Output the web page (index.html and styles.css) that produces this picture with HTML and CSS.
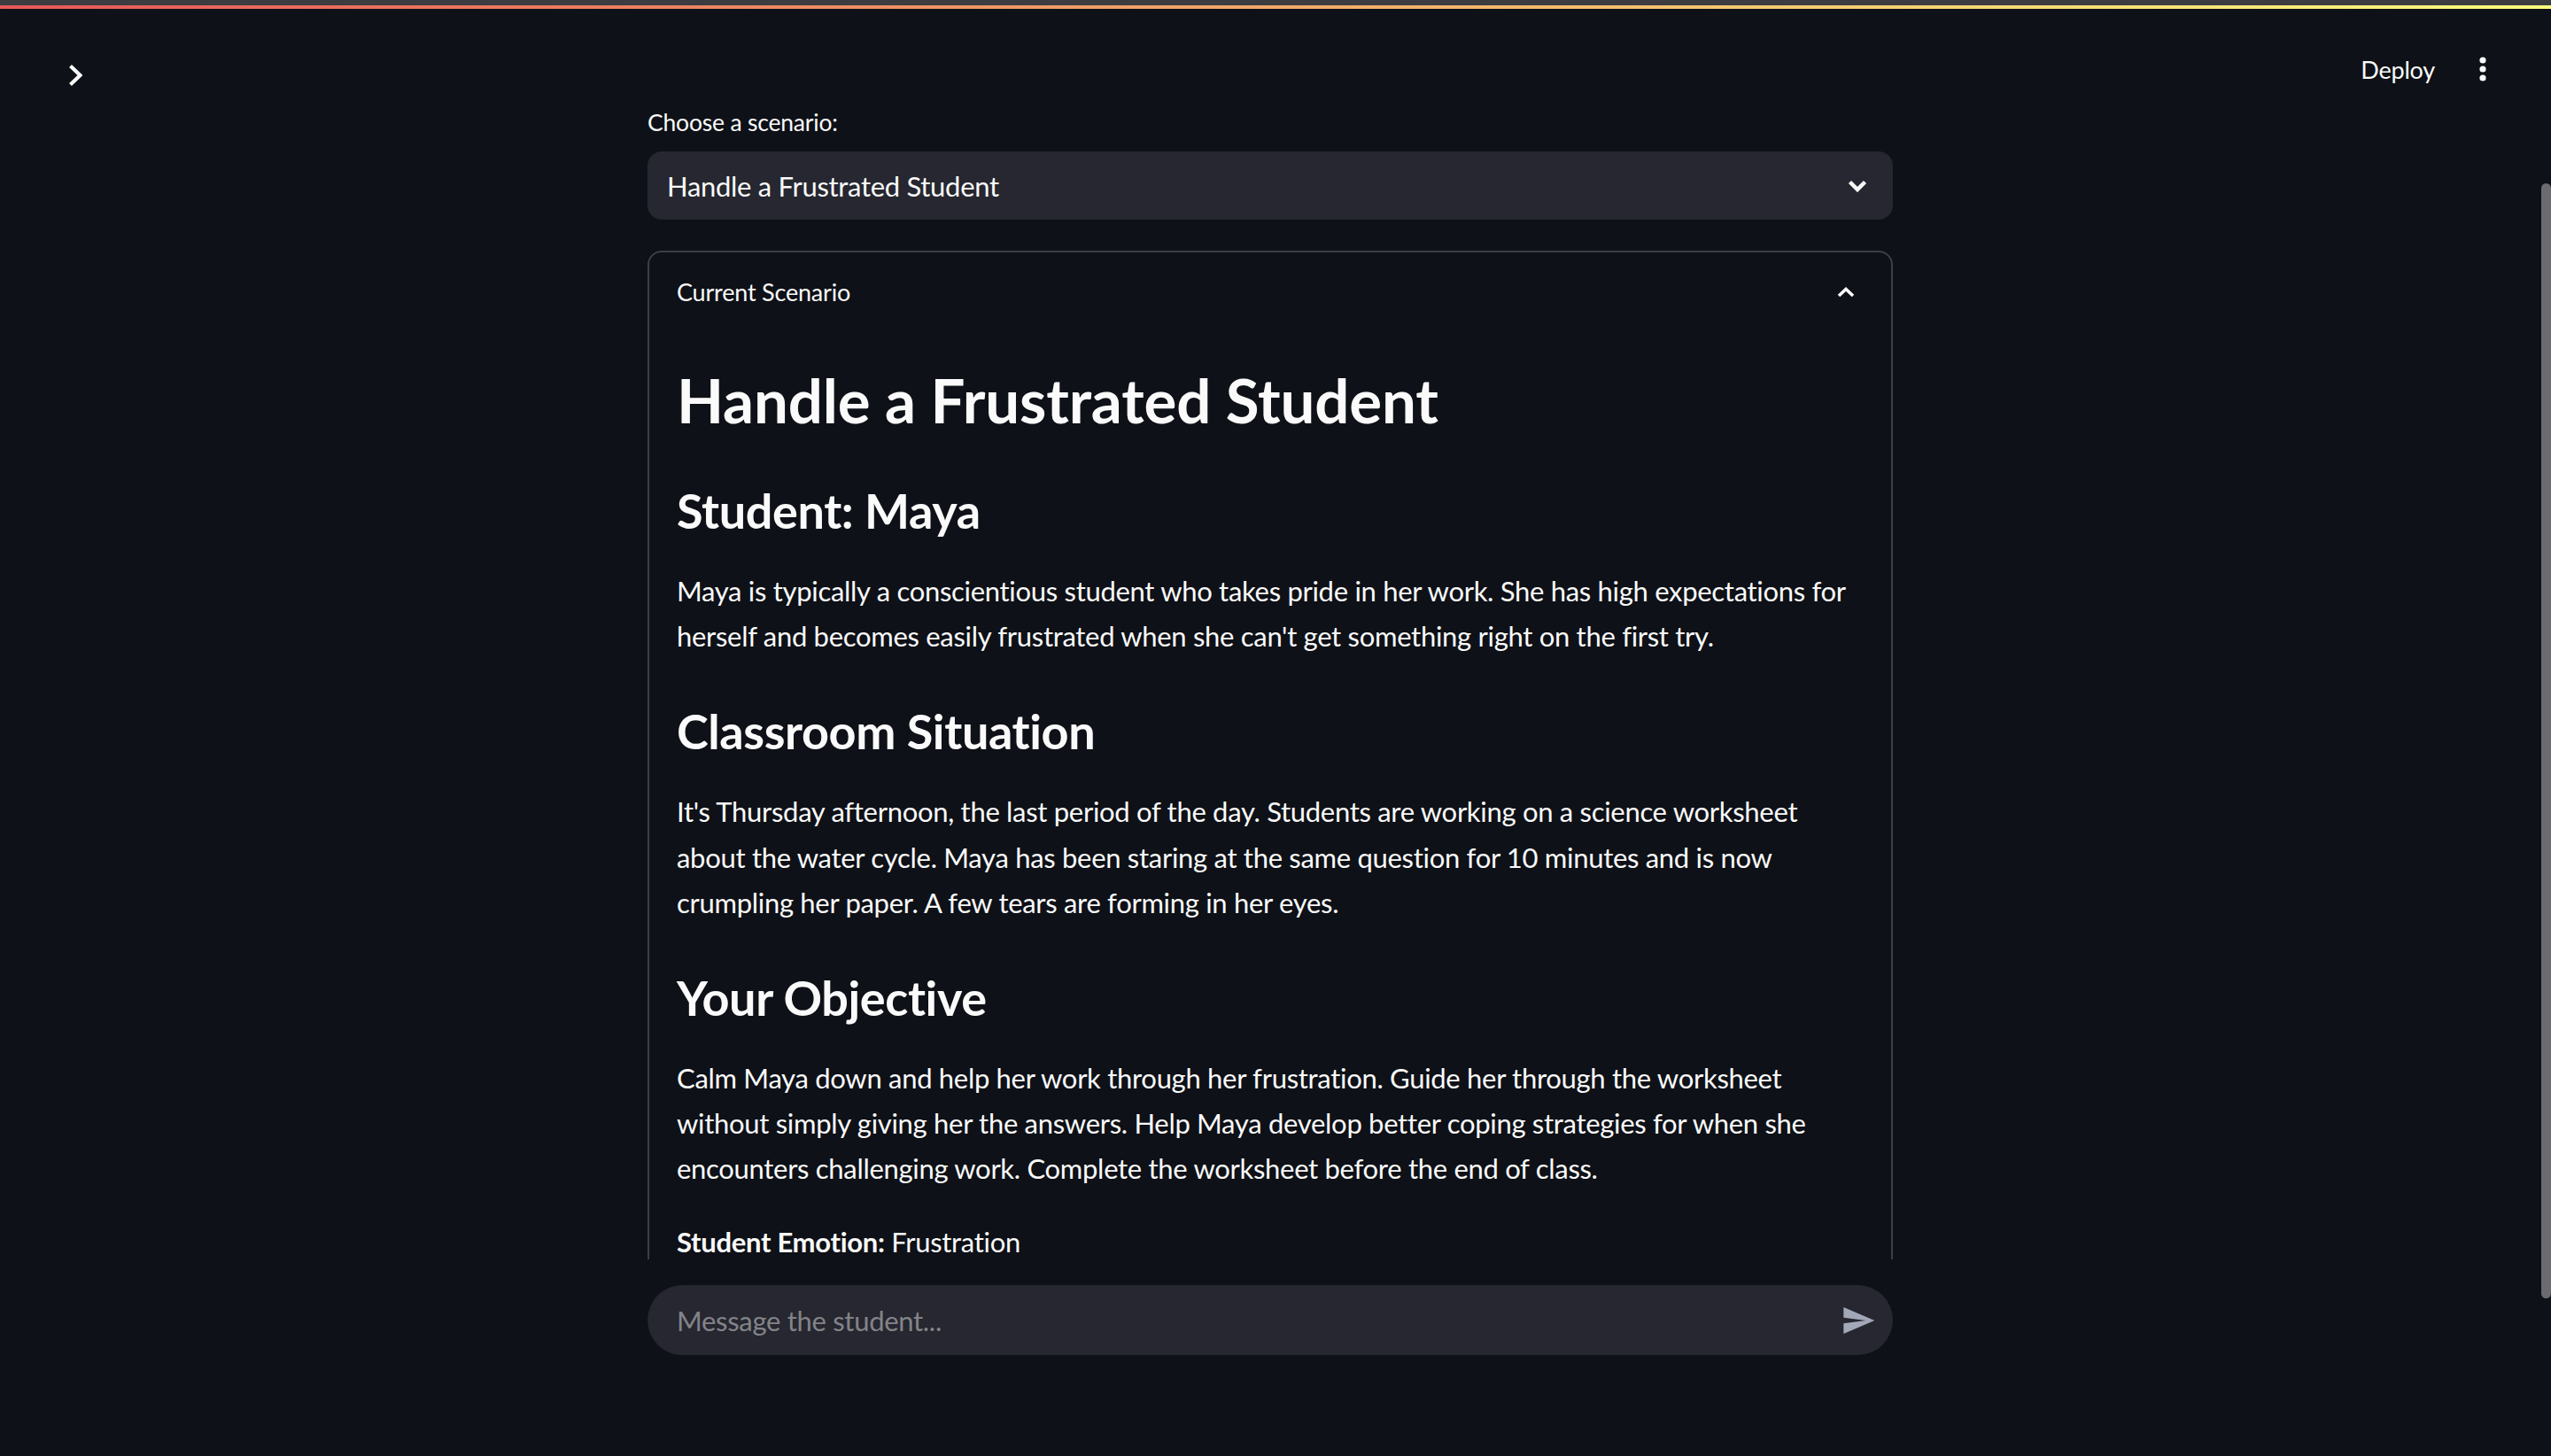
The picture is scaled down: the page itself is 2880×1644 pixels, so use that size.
FILE: index.html
```html
<!DOCTYPE html>
<html lang="en">
<head>
<meta charset="utf-8">
<title>Teacher Training Simulator</title>
<link rel="stylesheet" href="styles.css">
</head>
<body>
<div class="chrome"></div>
<div class="decoration"></div>
<header class="header">
  <button class="sidebar-toggle" aria-label="Open sidebar">
    <svg width="16" height="26" viewBox="0 0 16 26"><polyline points="2.5,2.5 13.5,13 2.5,23.5" fill="none" stroke="#fafafa" stroke-width="4.2" stroke-linejoin="miter"/></svg>
  </button>
  <div class="header-right">
    <span class="deploy">Deploy</span>
    <svg class="kebab" width="8" height="30" viewBox="0 0 8 30"><circle cx="4" cy="5" r="3.6" fill="#fafafa"/><circle cx="4" cy="15" r="3.6" fill="#fafafa"/><circle cx="4" cy="25" r="3.6" fill="#fafafa"/></svg>
  </div>
</header>
<main class="main">
  <div class="block">
    <label class="field-label">Choose a scenario:</label>
    <div class="select">
      <span>Handle a Frustrated Student</span>
      <svg width="22" height="14" viewBox="0 0 22 14"><polyline points="2.5,2.5 11,11 19.5,2.5" fill="none" stroke="#fafafa" stroke-width="4.5"/></svg>
    </div>
    <section class="expander">
      <div class="summary">
        <span>Current Scenario</span>
        <svg width="20" height="12" viewBox="0 0 20 12"><polyline points="2,10 10,2.5 18,10" fill="none" stroke="#fafafa" stroke-width="3.6"/></svg>
      </div>
      <div class="details">
        <h2>Handle a Frustrated Student</h2>
        <h3>Student: Maya</h3>
        <p>Maya is typically a conscientious student who takes pride in her work. She has high expectations for herself and becomes easily frustrated when she can't get something right on the first try.</p>
        <h3>Classroom Situation</h3>
        <p>It's Thursday afternoon, the last period of the day. Students are working on a science worksheet about the water cycle. Maya has been staring at the same question for 10 minutes and is now crumpling her paper. A few tears are forming in her eyes.</p>
        <h3>Your Objective</h3>
        <p>Calm Maya down and help her work through her frustration. Guide her through the worksheet without simply giving her the answers. Help Maya develop better coping strategies for when she encounters challenging work. Complete the worksheet before the end of class.</p>
        <p class="last"><strong>Student Emotion:</strong> Frustration</p>
      </div>
    </section>
  </div>
</main>
<div class="bottom">
  <div class="chat-input">
    <span class="placeholder">Message the student...</span>
    <svg class="send" width="40" height="40" viewBox="0 0 24 24"><path d="M2.01 21L23 12 2.01 3 2 10l15 2-15 2z" fill="#a3a8b8"/></svg>
  </div>
</div>
<div class="scrollbar"></div>
</body>
</html>
```
FILE: styles.css
```css
html, body {
  margin: 0;
  padding: 0;
}
body {
  width: 2880px;
  height: 1644px;
  overflow: hidden;
  background: #0e1117;
  color: #fafafa;
  font-family: Lato, "Liberation Sans", sans-serif;
  position: relative;
}
.chrome {
  height: 6px;
  background: #3c3c41;
}
.decoration {
  height: 4px;
  background: linear-gradient(90deg, #e85858, #fbfb7c);
}
.header {
  height: 106px;
  display: flex;
  justify-content: space-between;
  align-items: flex-start;
  padding: 0 73px 0 77px;
  box-sizing: border-box;
}
.sidebar-toggle {
  background: none;
  border: none;
  padding: 0;
  margin-top: 62px;
  width: 16px;
  height: 26px;
  display: block;
}
.sidebar-toggle svg { display: block; }
.header-right {
  display: flex;
  align-items: flex-start;
  gap: 50px;
}
.deploy {
  font-size: 27px;
  line-height: 40px;
  margin-top: 49px;
  letter-spacing: -0.2px;
}
.kebab {
  display: block;
  margin-top: 53px;
}
.main {
  height: 1306px;
  overflow: hidden;
  padding-right: 12px;
}
.block {
  width: 1406px;
  margin: 0 auto;
}
.field-label {
  display: block;
  font-size: 26.5px;
  line-height: 44px;
  margin-bottom: 11px;
  letter-spacing: -0.2px;
}
.select {
  height: 77px;
  background: #262730;
  border-radius: 16px;
  display: flex;
  align-items: center;
  justify-content: space-between;
  padding: 0 29px 0 22px;
  font-size: 31px;
  letter-spacing: -0.3px;
}
.select svg { display: block; }
.expander {
  margin-top: 35px;
  border: 2px solid rgba(250, 250, 250, 0.2);
  border-radius: 16px;
  height: 1400px;
}
.summary {
  display: flex;
  align-items: center;
  justify-content: space-between;
  padding: 22px 41px 24px 31px;
  font-size: 27px;
  line-height: 45px;
  letter-spacing: -0.2px;
}
.summary svg { display: block; }
.details {
  padding: 0 31px;
}
.details h2 {
  font-size: 69px;
  line-height: 86px;
  font-weight: 700;
  margin: 33px 0 0;
  letter-spacing: -0.15px;
}
.details h3 {
  font-size: 54px;
  line-height: 67px;
  font-weight: 700;
  margin: 48px 0 32px;
  letter-spacing: -0.4px;
}
.details p {
  font-size: 31px;
  line-height: 51.2px;
  margin: 0 0 32.5px;
  letter-spacing: -0.3px;
}
.details p.last {
  margin-bottom: 0;
  line-height: 26px;
  padding-top: 10.6px;
}
.details strong { font-weight: 700; }
.bottom {
  padding-top: 29px;
  display: flex;
  justify-content: center;
  padding-right: 12px;
}
.chat-input {
  width: 1406px;
  height: 79px;
  box-sizing: border-box;
  background: #262730;
  border-radius: 40px;
  display: flex;
  align-items: center;
  justify-content: space-between;
  padding: 0 19px 0 33px;
}
.placeholder {
  font-size: 31px;
  color: rgba(250, 250, 250, 0.45);
  letter-spacing: -0.3px;
}
.send { display: block; }
.scrollbar {
  position: absolute;
  right: 0;
  top: 207px;
  width: 11px;
  height: 1259px;
  background: #6b6c71;
  border-radius: 6px;
}
```
